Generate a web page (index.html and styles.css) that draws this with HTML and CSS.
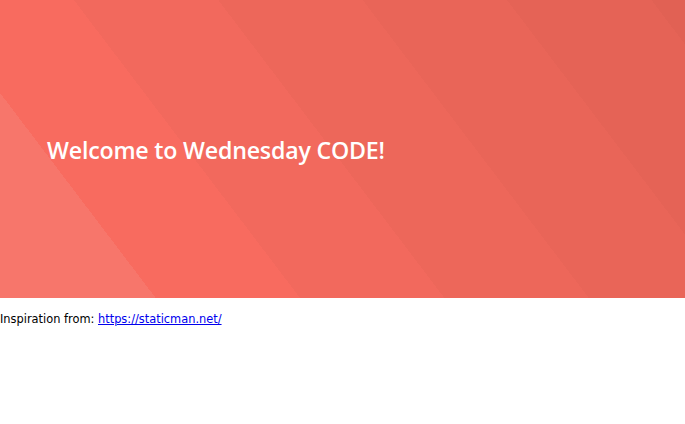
FILE: index.html
```html
<!DOCTYPE html>
<html>
<head>
<meta charset="utf-8">
<link rel="stylesheet" href="styles.css">
</head>
<body>
<section class="hero">
  <h1 class="hero-title">Welcome to Wednesday CODE!</h1>
</section>
<p class="credit">Inspiration from: <a href="https://staticman.net/">https://staticman.net/</a></p>
</body>
</html>
```
FILE: styles.css
```css
html, body {
  margin: 0;
  padding: 0;
  background: #fff;
}
.hero {
  height: 298px;
  display: flex;
  align-items: center;
  padding-left: 47px;
  padding-top: 2px;
  box-sizing: border-box;
  background-image: linear-gradient(52.8deg,
    #f7766b 0px, #f7766b 124px,
    #f86b5f 124px, #f86b5f 239px,
    #f2695d 239px, #f2695d 354px,
    #ed675a 354px, #ed675a 469px,
    #e96558 469px, #e96558 584px,
    #e56356 584px, #e56356 699px,
    #e16154 699px);
}
.hero-title {
  margin: 0;
  color: #fff;
  font-family: "Open Sans", sans-serif;
  font-weight: 600;
  font-size: 23.2px;
  letter-spacing: -0.2px;
}
.credit {
  margin: 14px 0 0;
  font-family: "DejaVu Sans", sans-serif;
  font-size: 11.4px;
  color: #000;
}
.credit a {
  color: #0000ee;
}
```
